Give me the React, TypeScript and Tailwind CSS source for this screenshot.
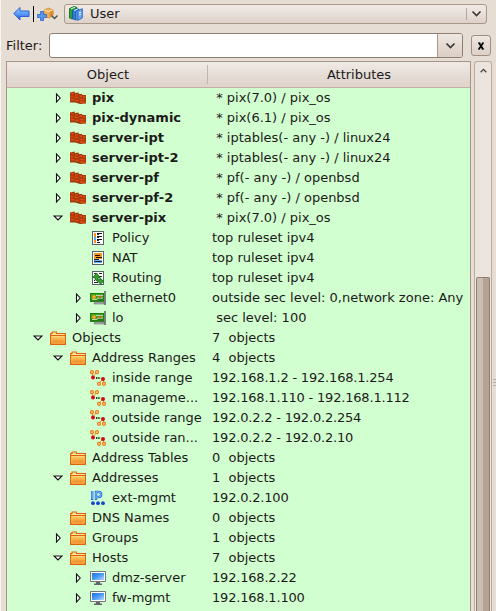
import React from "react";

type Kind = "firewall" | "policy" | "nat" | "routing" | "nic" | "folder" | "range" | "ip" | "host";
type Row = { level: 1 | 2 | 3; arrow?: "open" | "closed"; kind: Kind; name: string; attr: string; bold?: boolean };

const rows: Row[] = [
  { level: 2, arrow: "closed", kind: "firewall", name: "pix", attr: " * pix(7.0) / pix_os", bold: true },
  { level: 2, arrow: "closed", kind: "firewall", name: "pix-dynamic", attr: " * pix(6.1) / pix_os", bold: true },
  { level: 2, arrow: "closed", kind: "firewall", name: "server-ipt", attr: " * iptables(- any -) / linux24", bold: true },
  { level: 2, arrow: "closed", kind: "firewall", name: "server-ipt-2", attr: " * iptables(- any -) / linux24", bold: true },
  { level: 2, arrow: "closed", kind: "firewall", name: "server-pf", attr: " * pf(- any -) / openbsd", bold: true },
  { level: 2, arrow: "closed", kind: "firewall", name: "server-pf-2", attr: " * pf(- any -) / openbsd", bold: true },
  { level: 2, arrow: "open", kind: "firewall", name: "server-pix", attr: " * pix(7.0) / pix_os", bold: true },
  { level: 3, kind: "policy", name: "Policy", attr: "top ruleset ipv4" },
  { level: 3, kind: "nat", name: "NAT", attr: "top ruleset ipv4" },
  { level: 3, kind: "routing", name: "Routing", attr: "top ruleset ipv4" },
  { level: 3, arrow: "closed", kind: "nic", name: "ethernet0", attr: "outside sec level: 0,network zone: Any" },
  { level: 3, arrow: "closed", kind: "nic", name: "lo", attr: " sec level: 100" },
  { level: 1, arrow: "open", kind: "folder", name: "Objects", attr: "7  objects" },
  { level: 2, arrow: "open", kind: "folder", name: "Address Ranges", attr: "4  objects" },
  { level: 3, kind: "range", name: "inside range", attr: "192.168.1.2 - 192.168.1.254" },
  { level: 3, kind: "range", name: "manageme...", attr: "192.168.1.110 - 192.168.1.112" },
  { level: 3, kind: "range", name: "outside range", attr: "192.0.2.2 - 192.0.2.254" },
  { level: 3, kind: "range", name: "outside ran...", attr: "192.0.2.2 - 192.0.2.10" },
  { level: 2, kind: "folder", name: "Address Tables", attr: "0  objects" },
  { level: 2, arrow: "open", kind: "folder", name: "Addresses", attr: "1  objects" },
  { level: 3, kind: "ip", name: "ext-mgmt", attr: "192.0.2.100" },
  { level: 2, kind: "folder", name: "DNS Names", attr: "0  objects" },
  { level: 2, arrow: "closed", kind: "folder", name: "Groups", attr: "1  objects" },
  { level: 2, arrow: "open", kind: "folder", name: "Hosts", attr: "7  objects" },
  { level: 3, arrow: "closed", kind: "host", name: "dmz-server", attr: "192.168.2.22" },
  { level: 3, arrow: "closed", kind: "host", name: "fw-mgmt", attr: "192.168.1.100" },
];

const indent = { 1: "pl-[21px]", 2: "pl-[41px]", 3: "pl-[61px]" };

function Gradients() {
  return (
    <svg width="0" height="0" className="absolute">
      <defs>
        <linearGradient id="folder" x1="0" y1="0" x2="0" y2="1">
          <stop offset="0" stopColor="#fde28c" />
          <stop offset="1" stopColor="#f39a35" />
        </linearGradient>
        <linearGradient id="folderIn" x1="0" y1="0" x2="0" y2="1">
          <stop offset="0" stopColor="#f9c95d" />
          <stop offset="1" stopColor="#ee8420" />
        </linearGradient>
        <linearGradient id="screen" x1="0" y1="0" x2="1" y2="1">
          <stop offset="0" stopColor="#1a6fe0" />
          <stop offset=".5" stopColor="#4a9bf5" />
          <stop offset="1" stopColor="#b4d8ff" />
        </linearGradient>
        <linearGradient id="back" x1="0" y1="0" x2="0" y2="1">
          <stop offset="0" stopColor="#a8ceff" />
          <stop offset=".5" stopColor="#5b9bf8" />
          <stop offset="1" stopColor="#2458d8" />
        </linearGradient>
      </defs>
    </svg>
  );
}

function Icon({ kind }: { kind: Kind }) {
  return (
    <svg width="16" height="16" viewBox="0 0 16 16" className="block shrink-0">
      {kind === "firewall" && (
        <>
          <path d="M0 2.500L4.500 1.500 5 3l3.500-.5.5 1.500h3l.5 1H16v8.500L10 14 5 12.500H0z" fill="#9c3a12" />
          <path d="M1 3.200l3-.5v1.600H1zM5 4l3-.3v1.800L5 5.800zM.6 5.500l2.500.2v1.800H.6zM4 6.500l4.500.5v1.300L4 8zM9.500 5.200H12l.3 1.800-2.800.3zM13 6.200h2.500v1.800H13zM.6 8.500l4 .5v1.500h-4zM5.500 9.500l3 .3v1.700l-3-.2zM9.500 8.500l5 .4v1.500l-5-.2zM10 11.300l5.300-.1v1.500L10 13z" fill="#e04a08" />
        </>
      )}
      {(kind === "policy" || kind === "nat" || kind === "routing") && (
        <rect x="2.500" y="1.500" width="11" height="13" fill="#fff" stroke="#59616a" />
      )}
      {kind === "policy" && (
        <>
          <path d="M4 3h2v4H4zM4 10h2v3H4z" fill="#ff8a1e" />
          <path d="M4 7h2v3H4z" fill="#5aa6f0" />
          <path d="M7 3.500h5M7 6.500h5M7 9.500h5M7 12.500h3" stroke="#111" />
          <path d="M7 4.500h2M7 7.500h2M7 10.500h2" stroke="#222" />
        </>
      )}
      {kind === "nat" && (
        <>
          <path d="M4 3h8v6H4z" fill="#f79420" />
          <path d="M5 5.500h5M6 7.500h6" stroke="#17110b" />
          <path d="M4 10h8v3H4z" fill="#72aeee" />
          <path d="M4 9.500h5M4 11.500h8" stroke="#102b50" />
        </>
      )}
      {kind === "routing" && (
        <>
          <path d="M4 3.500h2M9 3.500h3M9 6.500h3M4 10.500h1M4 12.500h4" stroke="#222" />
          <path d="M3 7.500L6.500 3 10 7.500H8v2.300h2V8l3.500 3.300L10 14.600V13L5 9.500v-2z" fill="#36a428" stroke="#17691b" strokeWidth=".9" />
        </>
      )}
      {kind === "nic" && (
        <>
          <path d="M0 3h14v9H0z" fill="#21810f" />
          <path d="M1 4h12v5H1z" fill="#3ba51c" />
          <path d="M5 12h9v2H4v-1l1-1z" fill="#a6aaaa" stroke="#777" strokeWidth=".6" />
          <path d="M2 9.500h5l1-1.500h5M6 5.500h7" fill="none" stroke="#c1d3b0" />
          <circle cx="4" cy="7" r="1.900" fill="#ff9f26" />
          <circle cx="10" cy="7" r="1.300" fill="#e75535" />
          <path d="M15 1v14" stroke="#555d60" strokeWidth="1.500" />
        </>
      )}
      {kind === "folder" && (
        <>
          <path d="M.6 14.400V3.500H2V2h4.500v1.500h9v10.900z" fill="#fbe29d" stroke="#dc650b" strokeWidth="1.200" strokeLinejoin="round" />
          <path d="M.6 5.500h14.800v8.900H.6z" fill="url(#folder)" stroke="#dc650b" strokeWidth="1.200" />
          <path d="M2 7h12v6H2z" fill="url(#folderIn)" stroke="#f8c267" strokeWidth=".6" />
        </>
      )}
      {kind === "range" && (
        <>
          <path d="M2 3l1 4 3-4M13 9l-4 4M13 9l1 4" fill="none" stroke="#ee8a2a" strokeWidth="1" />
          <g fill="#ffdf8b" stroke="#ee7914" strokeWidth="1.200">
            <circle cx="2" cy="2.200" r="1.500" /><circle cx="7" cy="2.200" r="1.500" />
            <circle cx="9" cy="13.800" r="1.500" /><circle cx="14" cy="13.800" r="1.500" />
          </g>
          <path d="M6 8h4.500" stroke="#234b20" strokeWidth="1.800" strokeDasharray="1.400 .8" />
          <circle cx="3" cy="7.500" r="2" fill="#d60b12" /><circle cx="13" cy="9" r="2" fill="#d60b12" />
        </>
      )}
      {kind === "ip" && (
        <>
          <path d="M2.200 1v9M6 10V2h2.500q2.700 0 2.700 2.400T8.500 7H7" fill="none" stroke="#2573df" strokeWidth="2.400" />
          <path d="M2.200 1v8M6 9V2h2.500q2.700 0 2.700 2.400T8.500 7H6.500" fill="none" stroke="#9bccff" strokeWidth=".8" />
          <g fill="#1645d5"><circle cx="3" cy="13.200" r="1.900" /><circle cx="8" cy="13.200" r="1.900" /><circle cx="13" cy="13.200" r="1.900" /></g>
        </>
      )}
      {kind === "host" && (
        <>
          <path d="M.5 1.500h15v10H.5z" fill="#fff" stroke="#73777b" />
          <path d="M2 3h12v7H2z" fill="url(#screen)" />
          <path d="M6 12h4v1.500h2V15H4v-1.500h2z" fill="#63666a" />
        </>
      )}
    </svg>
  );
}

function Expander({ state }: { state?: "open" | "closed" }) {
  return (
    <span className="flex w-5 shrink-0 justify-center">
      {state && (
        <svg width="10" height="10" viewBox="0 0 10 10">
          <path
            d={state === "open" ? "M1 3H9L5 7z" : "M3.500 1V9L7.200 5z"}
            fill="#fff"
            stroke="#111"
            strokeWidth="1.100"
          />
        </svg>
      )}
    </span>
  );
}

function Chevron({ up = false, small = false }: { up?: boolean; small?: boolean }) {
  return (
    <svg width={small ? 7 : 11} height={small ? 5 : 7} viewBox="0 0 10 7">
      <path d={up ? "M1 6l4-4 4 4" : "M1 1.500l4 4 4-4"} fill="none" stroke="#3d3733" strokeWidth="1.700" />
    </svg>
  );
}

function Toolbar() {
  return (
    <div className="flex h-[27px] items-center">
      <svg className="ml-[12px] shrink-0" width="17" height="15" viewBox="0 0 17 15">
        <path d="M.8 7.500L7 1.500V5h9v5.500H7V14z" fill="url(#back)" stroke="#2a61d3" strokeWidth="1" />
      </svg>
      <span className="ml-[3px] h-[16px] w-px bg-black" />
      <svg className="ml-[3px] shrink-0" width="22" height="16" viewBox="0 0 22 16">
        <path d="M7 4l4.500-2L16 4l.5 4.500L12.500 12 7 11z" fill="#f0ac55" stroke="#d8852a" strokeWidth=".7" />
        <path d="M7.500 4l4 1.500L15.500 4" fill="none" stroke="#ffe2b0" strokeWidth="1.200" />
        <path d="M12.500 6l3.500-1.500V8l-3.500 3.500z" fill="#e08b2e" />
        <path d="M.5 8.500h3v-3h3v3h3v3h-3v3h-3v-3h-3z" fill="#5b96ed" stroke="#2865ca" strokeWidth=".8" />
        <path d="M14.500 9.500l3 3 3-3" fill="none" stroke="#464e40" strokeWidth="1.400" />
      </svg>
      <div className="ml-[5px] flex h-[20px] w-[423px] items-center rounded-[3px] border border-[#a99788] bg-linear-to-b from-[#f0eae6] via-[#e8dfd9] to-[#ddd1c9]">
        <svg className="ml-[4px] shrink-0" width="14" height="15" viewBox="0 0 14 15">
          <path d="M.5 2.500L5 .5l3 1v2L3.500 5v8l-3-1z" fill="#25a238" stroke="#0a651b" strokeWidth=".8" />
          <path d="M2 2.800L6 1.300" stroke="#e4f8e6" />
          <path d="M3.700 4.500L8 2.500l2 .8v2L6.500 6v8l-2.800-1z" fill="#3681e0" stroke="#174fa8" strokeWidth=".7" />
          <path d="M5 4.500L8.700 3" stroke="#e4f1ff" />
          <path d="M6.800 5.500l2-1 4.500-1.800V12l-4.500 2.300-2-.8z" fill="#65a8f5" stroke="#1c55b0" strokeWidth=".8" />
          <path d="M8.800 5.500v8.300" stroke="#2c6ac5" />
          <path d="M10 7l2-.8M10 9l2-.8" stroke="#e6f2ff" />
        </svg>
        <span className="ml-[7px]">User</span>
        <span className="ml-auto h-[12px] w-px bg-[#b7a79b]" />
        <span className="mx-[4px] flex"><Chevron /></span>
      </div>
    </div>
  );
}

export default function App() {
  return (
    <div className="flex h-[611px] w-[496px] overflow-hidden bg-[#e6ddd5] text-[13px] leading-5 text-[#1c1a19] font-['DejaVu_Sans',sans-serif]">
      <Gradients />
      <div className="w-px shrink-0 bg-[#f8f6f5]" />
      <main className="flex w-[495px] shrink-0 flex-col">
        <Toolbar />
        <div className="mt-[6px] flex h-[25px] items-center">
          <span className="ml-[5px] w-[43px] shrink-0">Filter:</span>
          <div className="flex h-[25px] w-[414px] rounded-[3px] border border-[#8e7d71] bg-white">
            <span className="ml-auto flex w-[25px] items-center justify-center rounded-r-[2px] border-l border-[#a99788] bg-linear-to-b from-[#eee7e2] to-[#dbcec5]">
              <Chevron />
            </span>
          </div>
          <button className="ml-[8px] flex h-[21px] w-[20px] items-center justify-center rounded-[3px] border border-[#a08e82] bg-linear-to-b from-[#eee7e2] to-[#ddd0c7]">
            <svg width="8" height="8" viewBox="0 0 8 8">
              <path d="M2 1l4 6M6 1L2 7" stroke="#000" strokeWidth="1.700" />
              <path d="M1 1h2.500M5 1h2M1 7h2M4.500 7H7" stroke="#000" />
            </svg>
          </button>
        </div>
        <div className="mt-[3px] flex h-[550px]">
          <section className="ml-[5px] flex w-[465px] flex-col border-x border-t border-[#a99488] bg-[#d2ffd0]">
            <header className="flex h-[26px] shrink-0 items-center border-b border-[#c5aea0] bg-linear-to-b from-[#f0eae6] via-[#e6ddd7] to-[#dfd3cb]">
              <span className="w-[200px] pl-[2px] text-center">Object</span>
              <span className="h-[19px] w-px bg-[#c4b5aa]" />
              <span className="flex-1 pl-[40px] text-center">Attributes</span>
            </header>
            {rows.map((row, i) => (
              <div key={i} className="flex h-5 shrink-0 items-center whitespace-pre">
                <div className={`flex w-[205px] shrink-0 items-center ${indent[row.level]}`}>
                  <Expander state={row.arrow} />
                  <span className="ml-[2px] mr-[6px]"><Icon kind={row.kind} /></span>
                  <span className={row.bold ? "font-bold" : ""}>{row.name}</span>
                </div>
                <span className={row.attr.startsWith("192") ? "tracking-[-0.19px]" : ""}>{row.attr}</span>
              </div>
            ))}
          </section>
          <aside className="ml-[3px] flex w-[18px] flex-col rounded-t-[3px] border-x border-t border-[#bcaaa0] bg-[#ebe4df]">
            <div className="flex h-[215px] shrink-0 justify-center pt-[6px]"><Chevron up small /></div>
            <div className="mx-px flex-1 rounded-t-[2px] border-x border-t border-[#937f72] bg-linear-to-r from-[#cbbdb2] from-50% to-[#b5a296] to-50%" />
          </aside>
          <div className="flex flex-1 flex-col gap-[2px] pl-[1px] pt-[318px]">
            <span className="h-px bg-[#b9aaa0]" />
            <span className="h-px bg-[#b9aaa0]" />
            <span className="h-px bg-[#b9aaa0]" />
          </div>
        </div>
      </main>
    </div>
  );
}
